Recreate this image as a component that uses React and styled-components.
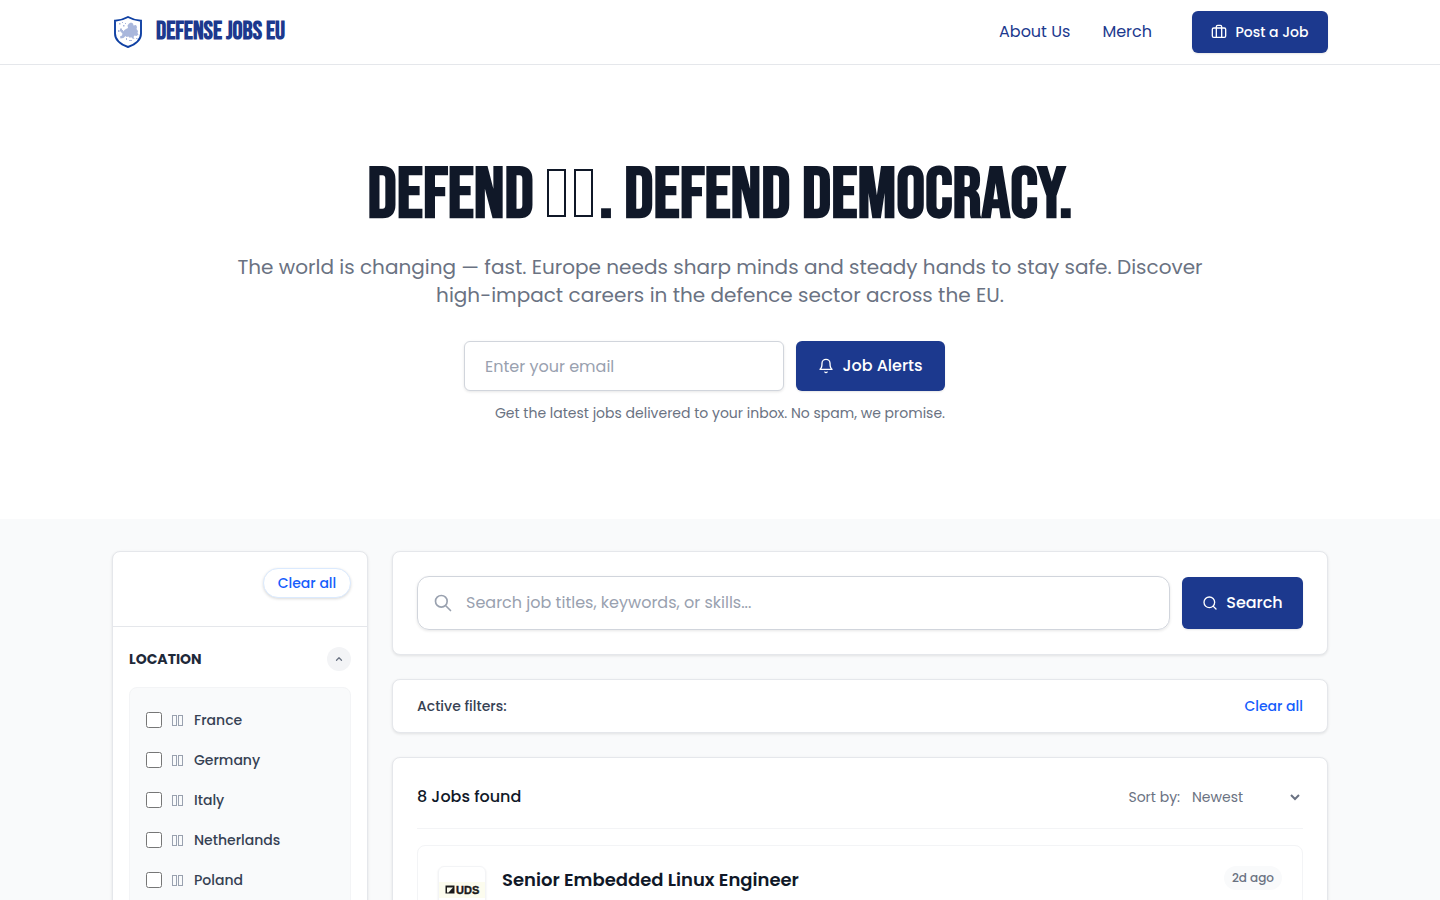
import React from 'react'
import styled, { createGlobalStyle } from 'styled-components'
import { Briefcase, ChevronUp, Search } from 'lucide-react'

const GlobalStyle = createGlobalStyle`
    *, *::before, *::after {
        box-sizing: border-box;
    }
    body {
        margin: 0;
        background: #ffffff;
        color: #101828;
        font-family: Poppins, Inter, "Open Sans", sans-serif;
        font-size: 16px;
        line-height: 24px;
    }
    h1, h2, h3, p, ul {
        margin: 0;
        padding: 0;
    }
    button, input, select {
        font: inherit;
    }
`;

const displayFont = '"Bebas Neue", "Roboto Condensed", "Liberation Sans Narrow", sans-serif';

const Container = styled.div`
    max-width: 1280px;
    margin: 0 auto;
    padding: 0 32px;
`;
const Header = styled.header`
    border-bottom: 1px solid #e5e7eb;
    background: #ffffff;
`;
const HeaderRow = styled(Container)`
    display: flex;
    align-items: center;
    justify-content: space-between;
    height: 64px;
`;
const Brand = styled.a`
    display: flex;
    align-items: center;
    gap: 12px;
    color: #1c398e;
    font-family: ${displayFont};
    font-size: 25px;
    font-weight: 700;
    text-decoration: none;
`;
const Nav = styled.nav`
    display: flex;
    align-items: center;
    gap: 32px;
`;
const NavLink = styled.a`
    color: #1c398e;
    text-decoration: none;
`;
const PrimaryButton = styled.button`
    display: inline-flex;
    align-items: center;
    justify-content: center;
    gap: 8px;
    min-width: ${({$width}) => $width};
    height: ${({$height}) => $height};
    margin-left: ${({$small}) => $small ? '8px' : '0'};
    padding: 0 ${({$small}) => $small ? '16px' : '20px'};
    border: 0;
    border-radius: 6px;
    background: #1c398e;
    color: #ffffff;
    font-size: ${({$small}) => $small ? '14px' : '16px'};
    font-weight: 500;
    box-shadow: 0 1px 2px rgba(0, 0, 0, 0.1);
    cursor: pointer;
`;

const Hero = styled.section`
    padding: 96px 0;
    text-align: center;
`;
const HeroTitle = styled.h1`
    margin-bottom: 22px;
    font-family: ${displayFont};
    font-size: 72px;
    font-weight: 700;
    line-height: 70px;
`;
const HeroText = styled.p`
    max-width: 1024px;
    margin: 0 auto 32px;
    color: #6a7282;
    font-size: 20px;
    line-height: 28px;
`;
const AlertForm = styled.form`
    display: flex;
    gap: 12px;
    max-width: 512px;
    margin: 0 auto 12px;
`;
const EmailInput = styled.input`
    width: 320px;
    height: 50px;
    padding: 0 20px;
    border: 1px solid #d1d5dc;
    border-radius: 6px;
    background: #ffffff;
    box-shadow: 0 1px 3px rgba(0, 0, 0, 0.1);

    &::placeholder {
        color: #99a1af;
    }
`;
const Hint = styled.p`
    color: #6a7282;
    font-size: 14px;
    line-height: 20px;
`;

const Board = styled.main`
    padding: 32px 0;
    background: #f9fafb;
`;
const BoardRow = styled(Container)`
    display: flex;
    gap: 24px;
`;
const Card = styled.section`
    border: 1px solid #e5e7eb;
    border-radius: 8px;
    background: #ffffff;
    box-shadow: 0 1px 3px rgba(0, 0, 0, 0.1);
`;
const Sidebar = styled(Card).attrs({ as: 'aside' })`
    flex: 0 0 256px;
`;
const SidebarTop = styled.div`
    display: flex;
    justify-content: flex-end;
    padding: 16px 16px 28px;
    border-bottom: 1px solid #e5e7eb;
`;
const TextButton = styled.button`
    padding: 0;
    border: 0;
    background: none;
    color: #155dfc;
    font-size: 14px;
    font-weight: 500;
    line-height: 20px;
    cursor: pointer;
`;
const PillButton = styled(TextButton)`
    min-width: 88px;
    padding: 4px 12px;
    border: 1px solid #dbeafe;
    border-radius: 16px;
    background: #ffffff;
    box-shadow: 0 1px 3px rgba(0, 0, 0, 0.15);
`;
const FilterGroup = styled.div`
    padding: 20px 16px;
`;
const FilterHead = styled.div`
    display: flex;
    align-items: center;
    justify-content: space-between;
    margin-bottom: 16px;
`;
const FilterTitle = styled.h3`
    color: #1e2939;
    font-size: 14px;
    font-weight: 700;
    text-transform: uppercase;
`;
const CollapseButton = styled.button`
    display: flex;
    align-items: center;
    justify-content: center;
    width: 24px;
    height: 24px;
    padding: 0;
    border: 0;
    border-radius: 50%;
    background: #f3f4f6;
    color: #6a7282;
`;
const FilterList = styled.ul`
    display: flex;
    flex-flow: column;
    padding: 12px 16px;
    border: 1px solid #f3f4f6;
    border-radius: 8px;
    background: #f9fafb;
    list-style: none;
`;
const Option = styled.label`
    display: flex;
    align-items: center;
    gap: 10px;
    height: 40px;
    color: #364153;
    font-size: 14px;
    font-weight: 500;
`;
const Checkbox = styled.input`
    width: 16px;
    height: 16px;
    margin: 0;
`;
const FlagBox = styled.span`
    display: inline-flex;
    gap: ${({$large}) => $large ? '8px' : '1px'};
    margin: ${({$large}) => $large ? '0 6px 0 2px' : '0 1px 0 0'};
    color: ${({$large}) => $large ? '#101828' : '#99a1af'};

    &::before, &::after {
        content: '';
        width: ${({$large}) => $large ? '19px' : '5px'};
        height: ${({$large}) => $large ? '48px' : '11px'};
        border: ${({$large}) => $large ? '2px' : '1px'} solid currentColor;
    }
`;

const Results = styled.div`
    display: flex;
    flex: 1;
    flex-flow: column;
    gap: 24px;
    min-width: 0;
`;
const SearchForm = styled.form`
    display: flex;
    align-items: center;
    gap: 12px;
    padding: 24px;
`;
const SearchBox = styled.label`
    display: flex;
    flex: 1;
    align-items: center;
    gap: 13px;
    height: 54px;
    padding: 0 15px;
    border: 1px solid #d1d5dc;
    border-radius: 12px;
    color: #99a1af;
    box-shadow: 0 1px 3px rgba(0, 0, 0, 0.1);
`;
const SearchInput = styled.input`
    flex: 1;
    padding: 0;
    border: 0;
    outline: 0;
    background: transparent;
    color: #101828;

    &::placeholder {
        color: #99a1af;
    }
`;
const FilterBar = styled(Card)`
    display: flex;
    align-items: center;
    justify-content: space-between;
    padding: 16px 24px;
    color: #364153;
    font-size: 14px;
    font-weight: 500;
    line-height: 20px;
`;
const JobsCard = styled(Card)`
    padding: 16px 24px 24px;
`;
const JobsHead = styled.div`
    display: flex;
    align-items: center;
    justify-content: space-between;
    margin-bottom: 16px;
    padding: 8px 0 16px;
    border-bottom: 1px solid #f3f4f6;
`;
const JobsCount = styled.h2`
    font-size: 16px;
    font-weight: 500;
`;
const SortLabel = styled.label`
    display: flex;
    align-items: center;
    gap: 8px;
    color: #6a7282;
    font-size: 14px;
    line-height: 20px;
`;
const SortSelect = styled.select`
    width: 115px;
    height: 30px;
    border: 0;
    background: transparent;
    color: #6a7282;
`;
const JobCard = styled.article`
    display: flex;
    gap: 16px;
    min-height: 144px;
    padding: 20px;
    border: 1px solid #f3f4f6;
    border-radius: 8px;
`;
const CompanyLogo = styled.div`
    display: flex;
    flex: 0 0 48px;
    align-items: center;
    height: 48px;
    border: 1px solid #f3f4f6;
    border-radius: 6px;
    box-shadow: 0 1px 2px rgba(0, 0, 0, 0.1);
`;
const JobTitle = styled.h3`
    flex: 1;
    font-size: 18px;
    font-weight: 600;
    line-height: 28px;
`;
const Age = styled.span`
    align-self: flex-start;
    padding: 4px 8px;
    border-radius: 12px;
    background: #f9fafb;
    color: #6a7282;
    font-size: 12px;
    font-weight: 500;
    line-height: 16px;
`;

const countries = ['France', 'Germany', 'Italy', 'Netherlands', 'Poland']

const ShieldLogo = () => (
    <svg width="32" height="32" viewBox="0 0 32 32" fill="none" aria-hidden="true">
        <path d="M16 1C12 3.300 7.500 4.400 3 4.700V17.500C3 24 8.500 28.300 16 31C23.500 28.300 29 24 29 17.500V4.700C24.500 4.400 20 3.300 16 1Z" stroke="#0f40a3" strokeWidth="1.900" />
        <path d="M15.500 9.500 17 7.500 19 6.500 21 7.500 21.500 9.500 24 9 25 11 24.500 13 26 15 25.500 17 26.500 18.500 24.500 20 22.500 19.500 21.500 21 22.500 23 20.500 22.500 19 21 18 22 16.500 20.500 14.500 21 13.500 20 11.500 22 8.500 22.500 8 20.500 10 19.500 10.500 17.500 9 16.500 11 15.500 12.500 14 14 13 16 12Z" fill="#a9b7dc" />
        <path d="M8 12.500h2v1.500h1v2H8.500v-1H8zM6 14h1.500v2H6zM7 7h1.500v1.500H7zM10 6h1v1h-1zM11 9h1.500v1.500H11zM13 7h1v1h-1zM17 24h3v1h-3zM14 22h1v2h-1zM24 22h1.500v1H24z" fill="#a9b7dc" />
    </svg>
)

const BellIcon = () => (
    <svg width="16" height="16" viewBox="0 0 24 24" fill="none" stroke="currentColor" strokeWidth="2" strokeLinecap="round" strokeLinejoin="round" aria-hidden="true">
        <path d="M6 8a6 6 0 0 1 12 0c0 7 3 9 3 9H3s3-2 3-9" />
        <path d="M10.3 21a1.94 1.94 0 0 0 3.4 0" />
    </svg>
)

const MagnifierIcon = () => (
    <svg width="20" height="20" viewBox="0 0 24 24" fill="none" stroke="currentColor" strokeWidth="2" strokeLinecap="round" strokeLinejoin="round" aria-hidden="true">
        <path d="M21 21l-6-6m2-5a7 7 0 11-14 0 7 7 0 0114 0z" />
    </svg>
)

const UdsLogo = () => (
    <svg width="46" height="16" viewBox="0 0 46 16" aria-hidden="true">
        <rect width="46" height="16" fill="#fcfcee" />
        <path d="M6.500 3.500h9v8h-9z" fill="#1a1a1a" />
        <path d="M8 5.500h6L9.500 10.500H8z" fill="#fcfcee" />
        <text x="17" y="11.5" fontFamily="Liberation Sans, sans-serif" fontSize="11" fontWeight="700" fill="#1a1a1a" stroke="#1a1a1a" strokeWidth="0.4">UDS</text>
    </svg>
)

const App = () => (
    <>
        <GlobalStyle />
        <Header>
            <HeaderRow>
                <Brand href="#"><ShieldLogo /> DEFENSE JOBS EU</Brand>
                <Nav>
                    <NavLink href="#about">About Us</NavLink>
                    <NavLink href="#merch">Merch</NavLink>
                    <PrimaryButton type="button" $small $width="136px" $height="42px">
                        <Briefcase size={16} /> Post a Job
                    </PrimaryButton>
                </Nav>
            </HeaderRow>
        </Header>
        <Hero>
            <Container>
                <HeroTitle>DEFEND <FlagBox $large />. DEFEND DEMOCRACY.</HeroTitle>
                <HeroText>
                    The world is changing — fast. Europe needs sharp minds and steady hands to stay safe. Discover high-impact careers in the defence sector across the EU.
                </HeroText>
                <AlertForm>
                    <EmailInput type="email" placeholder="Enter your email" aria-label="Enter your email" />
                    <PrimaryButton type="submit" $width="149px" $height="50px"><BellIcon /> Job Alerts</PrimaryButton>
                </AlertForm>
                <Hint>Get the latest jobs delivered to your inbox. No spam, we promise.</Hint>
            </Container>
        </Hero>
        <Board>
            <BoardRow>
                <Sidebar>
                    <SidebarTop>
                        <PillButton type="button">Clear all</PillButton>
                    </SidebarTop>
                    <FilterGroup>
                        <FilterHead>
                            <FilterTitle>Location</FilterTitle>
                            <CollapseButton type="button" aria-label="Location"><ChevronUp size={10} strokeWidth={3} /></CollapseButton>
                        </FilterHead>
                        <FilterList>
                            {countries.map(name => (
                                <li key={name}>
                                    <Option>
                                        <Checkbox type="checkbox" />
                                        <FlagBox />
                                        {name}
                                    </Option>
                                </li>
                            ))}
                        </FilterList>
                    </FilterGroup>
                </Sidebar>
                <Results>
                    <Card>
                        <SearchForm>
                            <SearchBox>
                                <MagnifierIcon />
                                <SearchInput type="text" placeholder="Search job titles, keywords, or skills..." aria-label="Search job titles, keywords, or skills" />
                            </SearchBox>
                            <PrimaryButton type="submit" $width="121px" $height="52px"><Search size={16} /> Search</PrimaryButton>
                        </SearchForm>
                    </Card>
                    <FilterBar>
                        <span>Active filters:</span>
                        <TextButton type="button">Clear all</TextButton>
                    </FilterBar>
                    <JobsCard>
                        <JobsHead>
                            <JobsCount>8 Jobs found</JobsCount>
                            <SortLabel>
                                Sort by:
                                <SortSelect defaultValue="newest">
                                    <option value="newest">Newest</option>
                                </SortSelect>
                            </SortLabel>
                        </JobsHead>
                        <JobCard>
                            <CompanyLogo><UdsLogo /></CompanyLogo>
                            <JobTitle>Senior Embedded Linux Engineer</JobTitle>
                            <Age>2d ago</Age>
                        </JobCard>
                    </JobsCard>
                </Results>
            </BoardRow>
        </Board>
    </>
)

export default App
